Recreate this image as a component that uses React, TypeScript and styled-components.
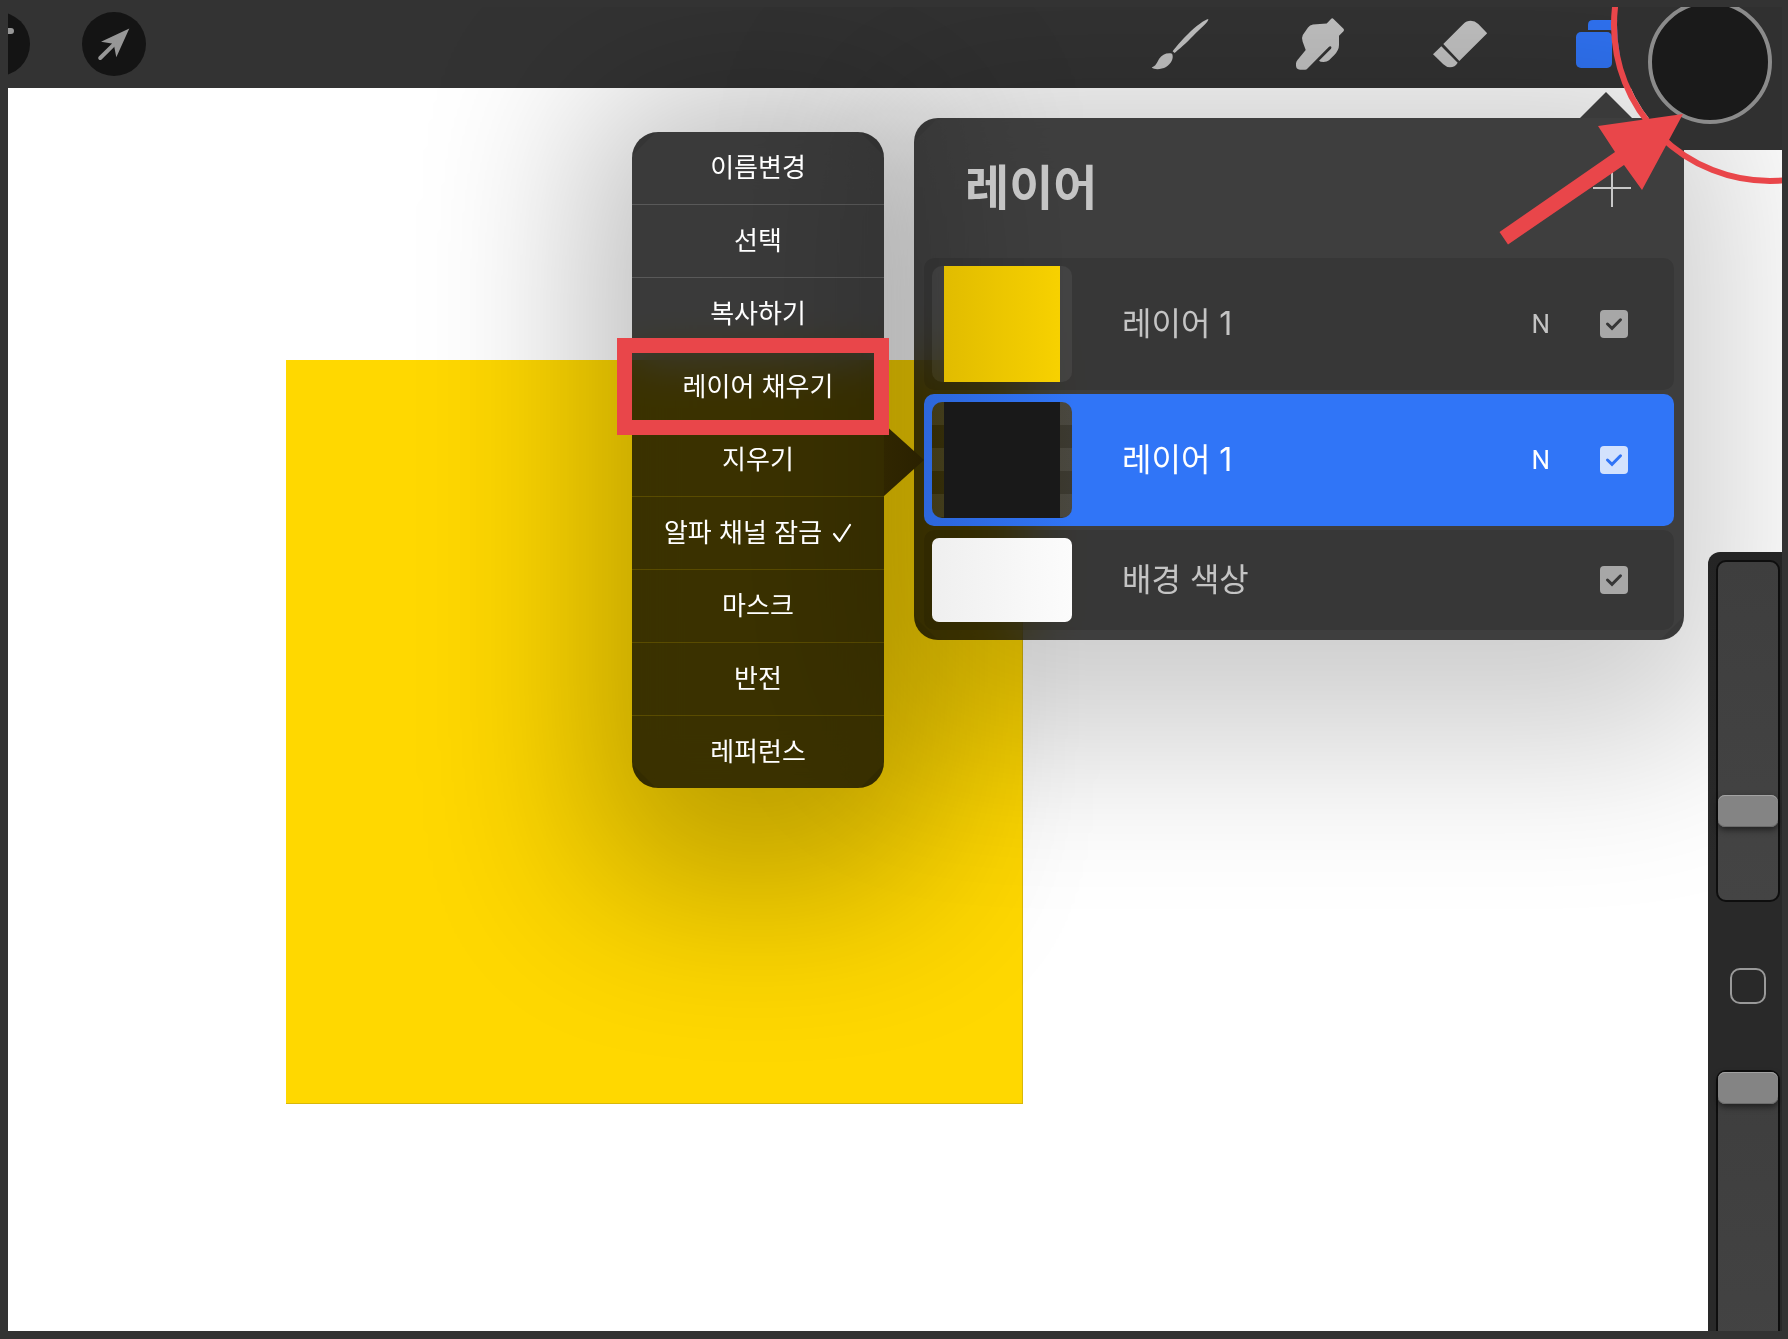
import React, { useState } from "react";
import styled, { createGlobalStyle } from "styled-components";

const GlobalStyle = createGlobalStyle`
  *, *::before, *::after { box-sizing: border-box; }
  body {
    margin: 0;
    background: #333333;
    font-family: Inter, "Noto Sans CJK KR", sans-serif;
  }
  button, input { font: inherit; }
  button { border: 0; padding: 0; background: none; color: inherit; cursor: pointer; }
`;

const Frame = styled.div`
  position: relative;
  display: flex;
  flex-direction: column;
  height: 100vh;
  padding: 7px 6px 8px 8px;
  overflow: hidden;
  background: #333333;
`;

const Toolbar = styled.header`
  display: flex;
  flex: none;
  justify-content: space-between;
  align-items: center;
  height: 81px;
  padding: 0 150px 7px 0;
  overflow: hidden;
`;

const ToolGroup = styled.div<{ $gap: number; $pull?: number }>`
  display: flex;
  gap: ${(p) => p.$gap}px;
  margin-left: ${(p) => -(p.$pull ?? 0)}px;
`;

const ToolButton = styled.button<{ $round?: boolean; $active?: boolean }>`
  width: 64px;
  height: 64px;
  border-radius: ${(p) => (p.$round ? "50%" : "0")};
  background: ${(p) => (p.$round ? "#141414" : "none")};
  color: ${(p) => (p.$active ? "#3074f6" : p.$round ? "#979797" : "#c4c4c4")};

  svg { display: block; width: 64px; height: 64px; }
`;

const Workspace = styled.main`
  display: flex;
  flex: 1;
  justify-content: space-between;
  min-height: 0;
  overflow: hidden;
  background: #ffffff;
`;

const Canvas = styled.div`
  flex: 1;
  padding: 272px 0 0 278px;
`;

const Artwork = styled.div`
  width: 737px;
  height: 744px;
  background: #ffd800;
  border: solid #d9b80a;
  border-width: 0 1px 1px 0;
`;

const Sidebar = styled.aside`
  position: relative;
  z-index: 2;
  display: flex;
  flex-direction: column;
  gap: 66px;
  align-items: center;
  width: 74px;
  margin-top: 464px;
  padding: 8px 2px 0 8px;
  overflow: hidden;
  border-radius: 12px 0 0 0;
  background: linear-gradient(#242424, #292929 40%);
`;

const Slider = styled.input`
  flex: none;
  width: 64px;
  height: 342px;
  margin: 0;
  appearance: none;
  writing-mode: vertical-lr;
  direction: rtl;
  border: 2px solid #0e0e0e;
  border-radius: 10px;
  background: linear-gradient(#3e3e3e, #444444);

  &::-webkit-slider-thumb {
    appearance: none;
    width: 60px;
    height: 32px;
    border-radius: 7px;
    background: #848484;
    box-shadow: inset 0 1px 0 #a2a2a2, inset 0 -1px 0 #6c6c6c, 0 3px 6px rgba(0, 0, 0, 0.5);
  }
`;

const ModifyButton = styled.button`
  flex: none;
  width: 36px;
  height: 36px;
  border: 2px solid #999999;
  border-radius: 10px;
`;

const Overlay = styled.div`
  position: absolute;
  inset: 7px 6px 8px 8px;
  z-index: 1;
  overflow: hidden;
  pointer-events: none;

  & > * { pointer-events: auto; }
`;

const Popover = styled.section<{ $top: number; $right: number; $width: number }>`
  position: absolute;
  top: ${(p) => p.$top}px;
  right: ${(p) => p.$right}px;
  width: ${(p) => p.$width}px;
`;

/* A soft drop shadow with the popover's own area cut out, so that the
   translucent surface is not darkened by the shadow beneath it. */
const Shadow = styled.div<{ $strength: number }>`
  position: absolute;
  inset: 0;
  z-index: -1;
  pointer-events: none;
  clip-path: polygon(
    evenodd,
    -500px -500px,
    calc(100% + 500px) -500px,
    calc(100% + 500px) calc(100% + 500px),
    -500px calc(100% + 500px),
    -500px -500px,
    0 24px,
    24px 0,
    calc(100% - 24px) 0,
    100% 24px,
    100% calc(100% - 24px),
    calc(100% - 24px) 100%,
    24px 100%,
    0 calc(100% - 24px),
    0 24px
  );

  &::before {
    content: "";
    position: absolute;
    inset: -40px -40px -100px;
    border-radius: 40px;
    background: #000000;
    opacity: ${(p) => p.$strength};
    filter: blur(88px);
  }
`;

const LayersSurface = styled.div`
  display: flex;
  flex-direction: column;
  gap: 4px;
  padding: 0 10px 10px;
  border-radius: 24px;
  background: rgba(0, 0, 0, 0.757);
  backdrop-filter: blur(30px);
  color: #c4c4c4;
`;

const LayersPointer = styled.div`
  position: absolute;
  top: -26px;
  right: 52px;
  width: 52px;
  height: 26px;
  background: #3a3a3a;
  clip-path: polygon(50% 0, 100% 100%, 0 100%);
`;

const LayersHeader = styled.header`
  display: flex;
  align-items: center;
  justify-content: space-between;
  height: 136px;
  padding: 4px 43px 0 41px;
`;

const LayersTitle = styled.h1`
  margin: 0;
  font-size: 48px;
  line-height: 56px;
  font-weight: 700;
`;

const AddButton = styled.button`
  width: 38px;
  height: 38px;

  svg { display: block; }
`;

const LayerList = styled.ul`
  display: flex;
  flex-direction: column;
  gap: 4px;
  margin: 0;
  padding: 0;
  list-style: none;
`;

const LayerRow = styled.li<{ $selected?: boolean }>`
  display: flex;
  align-items: center;
  gap: 50px;
  padding: 8px 46px 8px 8px;
  border-radius: 10px;
  background: ${(p) =>
    p.$selected ? "linear-gradient(90deg, #2d67da, #3075f7 150px)" : "rgba(0, 0, 0, 0.12)"};
  color: ${(p) => (p.$selected ? "#ffffff" : "#c4c4c4")};
`;

const Thumbnail = styled.div<{ $short?: boolean; $fill?: string; $checker?: boolean }>`
  display: flex;
  justify-content: center;
  flex: none;
  width: 140px;
  height: ${(p) => (p.$short ? 84 : 116)}px;
  overflow: hidden;
  border-radius: ${(p) => (p.$short ? 7 : 10)}px;
  background: ${(p) =>
    p.$fill ??
    (p.$checker
      ? "repeating-linear-gradient(rgba(255,255,255,0.07) 0 23px, transparent 23px 46px), linear-gradient(90deg, #322b06, #3b3931)"
      : "rgba(255, 255, 255, 0.06)")};
`;

const ThumbnailArt = styled.div<{ $fill: string }>`
  width: 116px;
  background: ${(p) => p.$fill};
`;

const LayerName = styled.label`
  flex: 1;
  font-size: 32px;
  line-height: 40px;
`;

const BlendButton = styled.button`
  font-family: Roboto, "Noto Sans CJK KR", sans-serif;
  font-size: 26px;
  line-height: 32px;
`;

const CheckCell = styled.span<{ $selected?: boolean }>`
  display: grid;
  width: 28px;
  height: 28px;
  color: ${(p) => (p.$selected ? "#3074f6" : "#363636")};

  input, svg { grid-area: 1 / 1; width: 28px; height: 28px; margin: 0; }
  input {
    appearance: none;
    border-radius: 4px;
    background: ${(p) => (p.$selected ? "#d3e2fd" : "#a7a7a7")};
  }
  svg { pointer-events: none; visibility: hidden; }
  input:checked + svg { visibility: visible; }
`;

const MenuSurface = styled.div`
  display: flex;
  flex-direction: column;
  gap: 1px;
  overflow: hidden;
  border-radius: 26px;
  background: rgba(0, 0, 0, 0.65);
  backdrop-filter: blur(24px);
`;

const MenuItem = styled.button`
  display: flex;
  align-items: center;
  justify-content: center;
  gap: 10px;
  height: 72px;
  background: rgba(0, 0, 0, 0.35);
  color: #ffffff;
  font-size: 26px;
  line-height: 36px;
`;

const MenuPointer = styled.div`
  position: absolute;
  top: 292px;
  right: -40px;
  width: 40px;
  height: 72px;
  background: linear-gradient(90deg, #302600, #2a2100);
  clip-path: polygon(0 0, 100% 50%, 0 100%);
`;

const Highlight = styled.div`
  position: absolute;
  top: 206px;
  left: -15px;
  right: -5px;
  height: 97px;
  border: 15px solid #e9464a;
  pointer-events: none;
`;

const Loupe = styled.div`
  position: absolute;
  top: -141px;
  right: -147px;
  width: 318px;
  height: 318px;
  border: 6px solid #e9464a;
  border-radius: 50%;
  background: linear-gradient(#303030 278px, transparent 278px) padding-box;
`;

const ColorButton = styled.button`
  position: absolute;
  top: -7px;
  right: 10px;
  width: 124px;
  height: 124px;
  border: 4px solid #8b8b8b;
  border-radius: 50%;
  background: #1a1a1a;
`;

const PointingArrow = styled.svg`
  position: absolute;
  top: 107px;
  right: 98px;
  width: 186px;
  height: 132px;
  pointer-events: none;
`;

const BrushIcon = () => (
  <svg viewBox="0 0 64 64" fill="currentColor" aria-hidden="true">
    <path d="M60.3 7C57 7.400 48 14 40 22C33 29 27.500 35.500 24.600 39.300L26.600 41C30 38 38.500 31 45 24C53 15.500 60.800 10 60.300 7Z" />
    <path d="M23.500 41.400C18 40.800 14 42.500 11 47C8.800 50.800 8 54 3.700 55.500C6.500 58 13.500 57.500 18 55C23 52 26 46.500 24.200 42Z" />
  </svg>
);

const SmudgeIcon = () => (
  <svg viewBox="0 0 64 64" fill="currentColor" aria-hidden="true">
    <path d="M43 7Q44.300 5.500 45.500 7L55.500 16.700Q56.600 18 55.500 19.200L51 23.700V33Q51 38 46.300 43L41 48.200Q39 50 35.500 50Q32 50 31 48.700L43 36.800Q43.900 35.500 43 34.500Q42 33.700 41 34.700L19.500 56.500Q18.500 57.700 17 57.700H12Q8 57.500 8 53.500V51.500Q8 49.500 9.500 48L17.700 38L14.600 29.500Q13.300 26 14.800 23L20 15.500Q21.800 12.700 25 12.400L38.700 11.600Z" />
  </svg>
);

const EraserIcon = () => (
  <svg viewBox="0 0 64 64" fill="currentColor" aria-hidden="true">
    <path d="M15.300 32L35.300 12Q38.500 8.700 42.700 8.700Q46.800 8.700 50.300 12L59.200 21.300L31.300 49Z" />
    <path d="M13.300 34.300L29.700 50.700Q27 55.300 22 55.300Q18.500 55.300 15.300 52.300L5 42.300Z" />
  </svg>
);

const LayersIcon = () => (
  <svg viewBox="0 0 64 64" fill="currentColor" aria-hidden="true">
    <rect x="8" y="20" width="36" height="36" rx="5" />
    <path d="M20 18V13Q20 8 25 8H51Q56 8 56 13V39Q56 44 51 44H46V23Q46 18 41 18Z" />
  </svg>
);

const TransformIcon = () => (
  <svg viewBox="0 0 64 64" fill="currentColor" aria-hidden="true">
    <path d="M47.300 16.500L34.300 45.300L32 33.600L29.800 31.400L19 29.700Z" />
    <path d="M18.200 46L33 31.300" stroke="currentColor" strokeWidth="4" strokeLinecap="round" />
  </svg>
);

const SelectionIcon = () => (
  <svg viewBox="0 0 64 64" fill="none" aria-hidden="true">
    <path
      d="M45 19H24Q16 19 16 26Q16 32 24 32H28Q36 32 36 39Q36 46 28 46H16"
      stroke="currentColor"
      strokeWidth="6"
      strokeLinecap="round"
    />
  </svg>
);

type Layer = {
  id: string;
  name: string;
  blend?: string;
  selected?: boolean;
  art?: string;
  fill?: string;
};

const layers: Layer[] = [
  { id: "yellow", name: "레이어 1", blend: "N", art: "linear-gradient(90deg, #e1bc00, #f7d100)" },
  { id: "black", name: "레이어 1", blend: "N", selected: true, art: "#191919" },
  { id: "background", name: "배경 색상", fill: "linear-gradient(90deg, #efefef, #fcfcfc)" },
];

const actions = [
  "이름변경",
  "선택",
  "복사하기",
  "레이어 채우기",
  "지우기",
  "알파 채널 잠금",
  "마스크",
  "반전",
  "레퍼런스",
];

function LayerItem({ layer }: { layer: Layer }) {
  const [visible, setVisible] = useState(true);
  return (
    <LayerRow $selected={layer.selected}>
      <Thumbnail $short={!layer.art} $fill={layer.fill} $checker={layer.selected}>
        {layer.art && <ThumbnailArt $fill={layer.art} />}
      </Thumbnail>
      <LayerName htmlFor={layer.id}>{layer.name}</LayerName>
      {layer.blend && <BlendButton type="button">{layer.blend}</BlendButton>}
      <CheckCell $selected={layer.selected}>
        <input
          id={layer.id}
          type="checkbox"
          checked={visible}
          onChange={(e) => setVisible(e.target.checked)}
        />
        <svg viewBox="0 0 28 28" fill="none" aria-hidden="true">
          <path
            d="M7.500 14L12 18.300L20.500 9.800"
            stroke="currentColor"
            strokeWidth="3"
            strokeLinecap="round"
          />
        </svg>
      </CheckCell>
    </LayerRow>
  );
}

export default function App() {
  return (
    <>
      <GlobalStyle />
      <Frame>
        <Toolbar>
          <ToolGroup $gap={52} $pull={42}>
            <ToolButton type="button" $round aria-label="선택 도구">
              <SelectionIcon />
            </ToolButton>
            <ToolButton type="button" $round aria-label="변형">
              <TransformIcon />
            </ToolButton>
          </ToolGroup>
          <ToolGroup $gap={76}>
            <ToolButton type="button" aria-label="브러시">
              <BrushIcon />
            </ToolButton>
            <ToolButton type="button" aria-label="스머지">
              <SmudgeIcon />
            </ToolButton>
            <ToolButton type="button" aria-label="지우개">
              <EraserIcon />
            </ToolButton>
            <ToolButton type="button" $active aria-label="레이어">
              <LayersIcon />
            </ToolButton>
          </ToolGroup>
        </Toolbar>

        <Workspace>
          <Canvas>
            <Artwork />
          </Canvas>
          <Sidebar>
            <Slider type="range" defaultValue={24} aria-label="브러시 크기" />
            <ModifyButton type="button" aria-label="수정" />
            <Slider type="range" defaultValue={100} aria-label="불투명도" />
          </Sidebar>
        </Workspace>

        <Overlay>
          <Popover $top={111} $right={98} $width={770}>
            <Shadow $strength={0.2} />
            <LayersPointer />
            <LayersSurface>
              <LayersHeader>
                <LayersTitle>레이어</LayersTitle>
                <AddButton type="button" aria-label="레이어 추가">
                  <svg viewBox="0 0 38 38" width="38" height="38" aria-hidden="true">
                    <path d="M19 0V38M0 19H38" stroke="#c8c8c8" strokeWidth="2" />
                  </svg>
                </AddButton>
              </LayersHeader>
              <LayerList>
                {layers.map((layer) => (
                  <LayerItem key={layer.id} layer={layer} />
                ))}
              </LayerList>
            </LayersSurface>
          </Popover>

          <Popover $top={125} $right={898} $width={252}>
            <Shadow $strength={0.27} />
            <MenuSurface>
              {actions.map((action) => (
                <MenuItem key={action} type="button">
                  {action}
                  {action === "알파 채널 잠금" && (
                    <svg viewBox="0 0 20 20" width="20" height="20" fill="none" aria-hidden="true">
                      <path
                        d="M2 11L7.500 18L18 2"
                        stroke="currentColor"
                        strokeWidth="2.200"
                        strokeLinecap="round"
                        strokeLinejoin="round"
                      />
                    </svg>
                  )}
                </MenuItem>
              ))}
            </MenuSurface>
            <MenuPointer />
            <Highlight />
          </Popover>

          <Loupe />
          <ColorButton type="button" aria-label="색상" />
          <PointingArrow viewBox="0 0 186 132" aria-hidden="true">
            <path d="M185 0L100 12L117 38L1.500 118L10 130.500L126 51L144 76Z" fill="#e9464a" />
          </PointingArrow>
        </Overlay>
      </Frame>
    </>
  );
}
